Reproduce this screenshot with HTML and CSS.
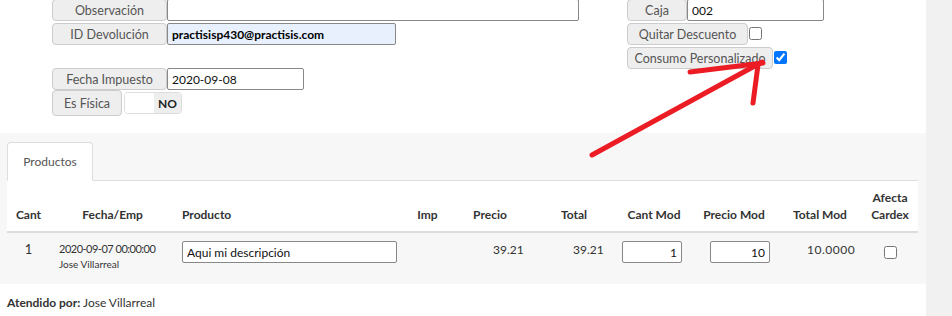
FILE: index.html
```html
<!doctype html>
<html>
<head>
<meta charset="utf-8">
<title>Devolución</title>
<link rel="stylesheet" href="styles.css">
</head>
<body>
<div class="page">
	<div class="main">
		<div class="form">
			<div class="col-left">
				<div class="field">
					<span class="addon w115">Observación</span>
					<input class="txt w-obs" type="text" value="">
				</div>
				<div class="field">
					<span class="addon w115">ID Devolución</span>
					<input class="txt w-id autofill" type="text" value="practisisp430@practisis.com">
				</div>
				<div class="field spaced">
					<span class="addon w115">Fecha Impuesto</span>
					<input class="txt w-fecha" type="text" value="2020-09-08">
				</div>
				<div class="field tall">
					<span class="addon w70">Es Física</span>
					<div class="toggle"><span class="knob"></span><span class="state">NO</span></div>
				</div>
			</div>
			<div class="col-right">
				<div class="field">
					<span class="addon w60">Caja</span>
					<input class="txt w-caja" type="text" value="002">
				</div>
				<div class="field">
					<span class="addon w121">Quitar Descuento</span>
					<input class="check" type="checkbox">
				</div>
				<div class="field">
					<span class="addon w146">Consumo Personalizado</span>
					<input class="check" type="checkbox" checked>
				</div>
			</div>
		</div>

		<div class="panel">
			<ul class="tabs">
				<li class="tab">Productos</li>
			</ul>
			<div class="tab-body">
				<table class="grid">
					<colgroup>
						<col style="width:43px"><col style="width:125px"><col style="width:230px"><col style="width:45px"><col style="width:80px">
						<col style="width:88px"><col style="width:72px"><col style="width:88px"><col style="width:84px"><col style="width:56px">
					</colgroup>
					<thead>
						<tr>
							<th>Cant</th>
							<th>Fecha/Emp</th>
							<th class="left">Producto</th>
							<th>Imp</th>
							<th>Precio</th>
							<th>Total</th>
							<th>Cant Mod</th>
							<th>Precio Mod</th>
							<th>Total Mod</th>
							<th>Afecta<br>Cardex</th>
						</tr>
					</thead>
					<tbody>
						<tr>
							<td class="c-cant">1</td>
							<td class="c-fecha"><div class="fecha">2020-09-07 00:00:00</div><div class="emp">Jose Villarreal</div></td>
							<td class="c-prod"><input class="txt w-prod" type="text" value="Aqui mi descripción"></td>
							<td></td>
							<td class="c-num">39.21</td>
							<td class="c-num">39.21</td>
							<td class="c-cmod"><input class="txt w-mod num" type="text" value="1"></td>
							<td class="c-pmod"><input class="txt w-mod num" type="text" value="10"></td>
							<td class="c-tmod">10.0000</td>
							<td class="c-afecta"><input class="check" type="checkbox"></td>
						</tr>
					</tbody>
				</table>
			</div>
		</div>

		<div class="footer"><b>Atendido por:</b> Jose Villarreal</div>

		<svg class="marks" width="926" height="316" viewBox="0 0 926 316">
			<g stroke="#ec1c24" stroke-width="5" stroke-linecap="round" fill="none">
				<line x1="592" y1="155" x2="762" y2="62"/>
				<line x1="690" y1="72" x2="763" y2="63"/>
				<line x1="753" y1="103" x2="758" y2="65"/>
			</g>
		</svg>
	</div>
	<div class="side"></div>
</div>
</body>
</html>
```

FILE: styles.css
```css
body{
	margin:0;
	font-family:Lato,"Liberation Sans",sans-serif;
	font-size:13px;
	color:#333;
}

.page{
	display:flex;
	height:316px;
	overflow:hidden;
}

.main{
	width:926px;
	position:relative;
}

.side{
	flex:1;
	background:#f1f1f1;
}

/* formulario superior */
.form{
	display:flex;
	height:134px;
	margin-top:-1px;
}

.col-left{
	margin-left:52px;
	width:575px;
}

.field{
	display:flex;
	height:22px;
	margin-bottom:2px;
}

.field.spaced{
	margin-top:23px;
	margin-bottom:0;
}

.field.tall{
	height:26px;
}

.addon{
	box-sizing:border-box;
	display:flex;
	align-items:center;
	justify-content:center;
	padding:0;
	background:#eee;
	border:1px solid #ccc;
	border-radius:4px;
	font-size:12.5px;
	color:#555;
	white-space:nowrap;
}

.w115{width:115px;}
.w70{width:70px;}
.w60{width:60px;}
.w121{width:121px;}
.w146{width:146px;}

.txt{
	box-sizing:border-box;
	height:22px;
	margin:0;
	padding:0 4px;
	border:1px solid #888;
	border-radius:2px;
	font-family:Lato,"Liberation Sans",sans-serif;
	font-size:12px;
	color:#111;
	background:#fff;
}

.w-obs{width:412px;}
.w-id{width:229px;}
.w-fecha{width:137px;}
.w-caja{width:137px;}
.w-prod{width:215px;}
.w-mod{width:60px;}

.autofill{
	background:#e8f0fe;
	font-weight:bold;
	color:#000;
}

.num{
	text-align:right;
}

.toggle{
	display:flex;
	box-sizing:border-box;
	width:58px;
	margin:2px 0 2px 2px;
	border:1px solid #ddd;
	border-radius:4px;
	overflow:hidden;
}

.toggle .knob{
	width:29px;
	background:#fff;
}

.toggle .state{
	flex:1;
	display:flex;
	align-items:center;
	justify-content:center;
	background:#eee;
	font-size:12px;
	font-weight:bold;
	color:#222;
}

.check{
	width:13px;
	height:13px;
	margin:4px 0 0 1px;
}

/* panel de productos */
.panel{
	box-sizing:border-box;
	height:151px;
	padding:9px 8px 0 7px;
	background:#f7f7f7;
}

.tabs{
	display:flex;
	list-style:none;
	margin:0;
	padding:0;
	height:38px;
	border-bottom:1px solid #ddd;
}

.tab{
	box-sizing:border-box;
	display:flex;
	align-items:center;
	justify-content:center;
	width:86px;
	height:39px;
	margin-bottom:-1px;
	background:#fff;
	border:1px solid #ddd;
	border-bottom-color:transparent;
	border-radius:4px 4px 0 0;
	font-size:12px;
	color:#555;
}

.tab-body{
	background:#fff;
}

.grid{
	width:911px;
	table-layout:fixed;
	border-collapse:separate;
	border-spacing:0;
	font-size:12px;
	line-height:17px;
}

.grid th{
	padding:8px 0;
	vertical-align:bottom;
	text-align:center;
	font-weight:bold;
	color:#333;
	border-bottom:2px solid #ddd;
}

.grid th.left{
	text-align:left;
	padding-left:7px;
}

.grid tbody{
	background:#f7f7f7;
}

.grid td{
	padding:8px 0 13px;
	vertical-align:top;
	color:#333;
}

.c-cant{text-align:center;font-size:13px;}
.c-fecha{padding-left:9px !important;}
.c-prod{padding-left:7px !important;}
.c-num{padding-left:43px !important;}
.c-cmod{padding-left:4px !important;}
.c-pmod{padding-left:20px !important;}
.c-tmod{padding-left:29px !important;letter-spacing:0.5px;}
.c-afecta{padding-left:21px !important;}

.c-afecta .check{
	margin:5px 0 0 1px;
}

.fecha{
	font-size:11px;
	line-height:16px;
	letter-spacing:-0.5px;
}

.emp{
	font-size:10px;
	line-height:14px;
}

.footer{
	padding:10px 7px;
	font-size:12px;
	line-height:17px;
	color:#333;
}

.marks{
	position:absolute;
	left:0;
	top:0;
	pointer-events:none;
}
```
